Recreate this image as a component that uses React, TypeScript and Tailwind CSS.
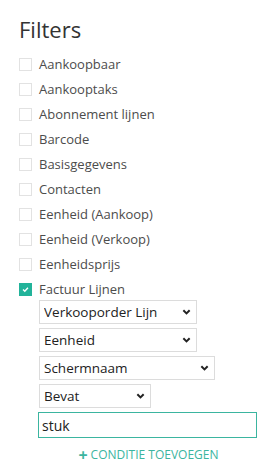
import { useState } from "react";

const options = [
  "Aankoopbaar",
  "Aankooptaks",
  "Abonnement lijnen",
  "Barcode",
  "Basisgegevens",
  "Contacten",
  "Eenheid (Aankoop)",
  "Eenheid (Verkoop)",
  "Eenheidsprijs",
];

const Chevron = () => (
  <svg
    viewBox="0 0 10 10"
    className="pointer-events-none absolute right-[6px] top-1/2 h-[9px] w-[9px] -translate-y-1/2"
  >
    <path d="M1.5 3 L5 6.5 L8.5 3" fill="none" stroke="#222" strokeWidth="2.2" />
  </svg>
);

const Select = ({ value, width }: { value: string; width: string }) => (
  <div className={`relative h-[24px] ${width}`}>
    <select
      defaultValue={value}
      className="block h-[24px] w-full appearance-none rounded-none border border-[#dcdcdc] bg-white pl-[4px] pr-5 text-[13.5px] text-[#222] outline-none"
    >
      <option>{value}</option>
    </select>
    <Chevron />
  </div>
);

export default function App() {
  const [checked, setChecked] = useState<string[]>([]);

  const toggle = (name: string) =>
    setChecked((c) => (c.includes(name) ? c.filter((x) => x !== name) : [...c, name]));

  return (
    <div className="min-h-[471px] bg-white pl-[19px] pt-[14px] font-['Open_Sans',sans-serif] text-[#4c4c4c]">
      <h2 className="mb-[8px] text-[22px] leading-[30px] text-[#333]">Filters</h2>

      <div className="flex flex-col">
        {options.map((name) => (
          <label key={name} className="flex h-[25px] cursor-pointer items-center gap-[7px]">
            <span
              onClick={() => toggle(name)}
              className={`h-[13px] w-[13px] border ${
                checked.includes(name) ? "border-[#22b39a] bg-[#22b39a]" : "border-[#e2e2e2] bg-white"
              }`}
            />
            <span className="text-[13px]">{name}</span>
          </label>
        ))}

        <label className="flex h-[25px] items-center gap-[7px]">
          <span className="flex h-[13px] w-[13px] items-center justify-center bg-[#22b39a]">
            <svg viewBox="0 0 10 10" className="h-[7px] w-[7px]">
              <path d="M1.5 5 L4 7.5 L8.5 2.5" fill="none" stroke="white" strokeWidth="2" />
            </svg>
          </span>
          <span className="text-[13px]">Factuur Lijnen</span>
        </label>
      </div>

      <div className="-mt-[2px] ml-[20px] flex flex-col gap-[4px]">
        <Select value="Verkooporder Lijn" width="w-[158px]" />
        <Select value="Eenheid" width="w-[158px]" />
        <Select value="Schermnaam" width="w-[176px]" />
        <Select value="Bevat" width="w-[112px]" />
        <input
          defaultValue="stuk"
          className="block h-[26px] w-[219px] -ml-px border-[1.5px] border-[#3bb5a0] px-[3px] text-[14px] text-[#222] outline-none"
        />
        <button className="mt-[5px] flex w-[219px] items-center justify-center gap-[3px] text-[12px] uppercase leading-[16px] text-[#3bb5a0]">
          <span className="text-[16px] font-bold leading-none">+</span>
          Conditie toevoegen
        </button>
      </div>
    </div>
  );
}
